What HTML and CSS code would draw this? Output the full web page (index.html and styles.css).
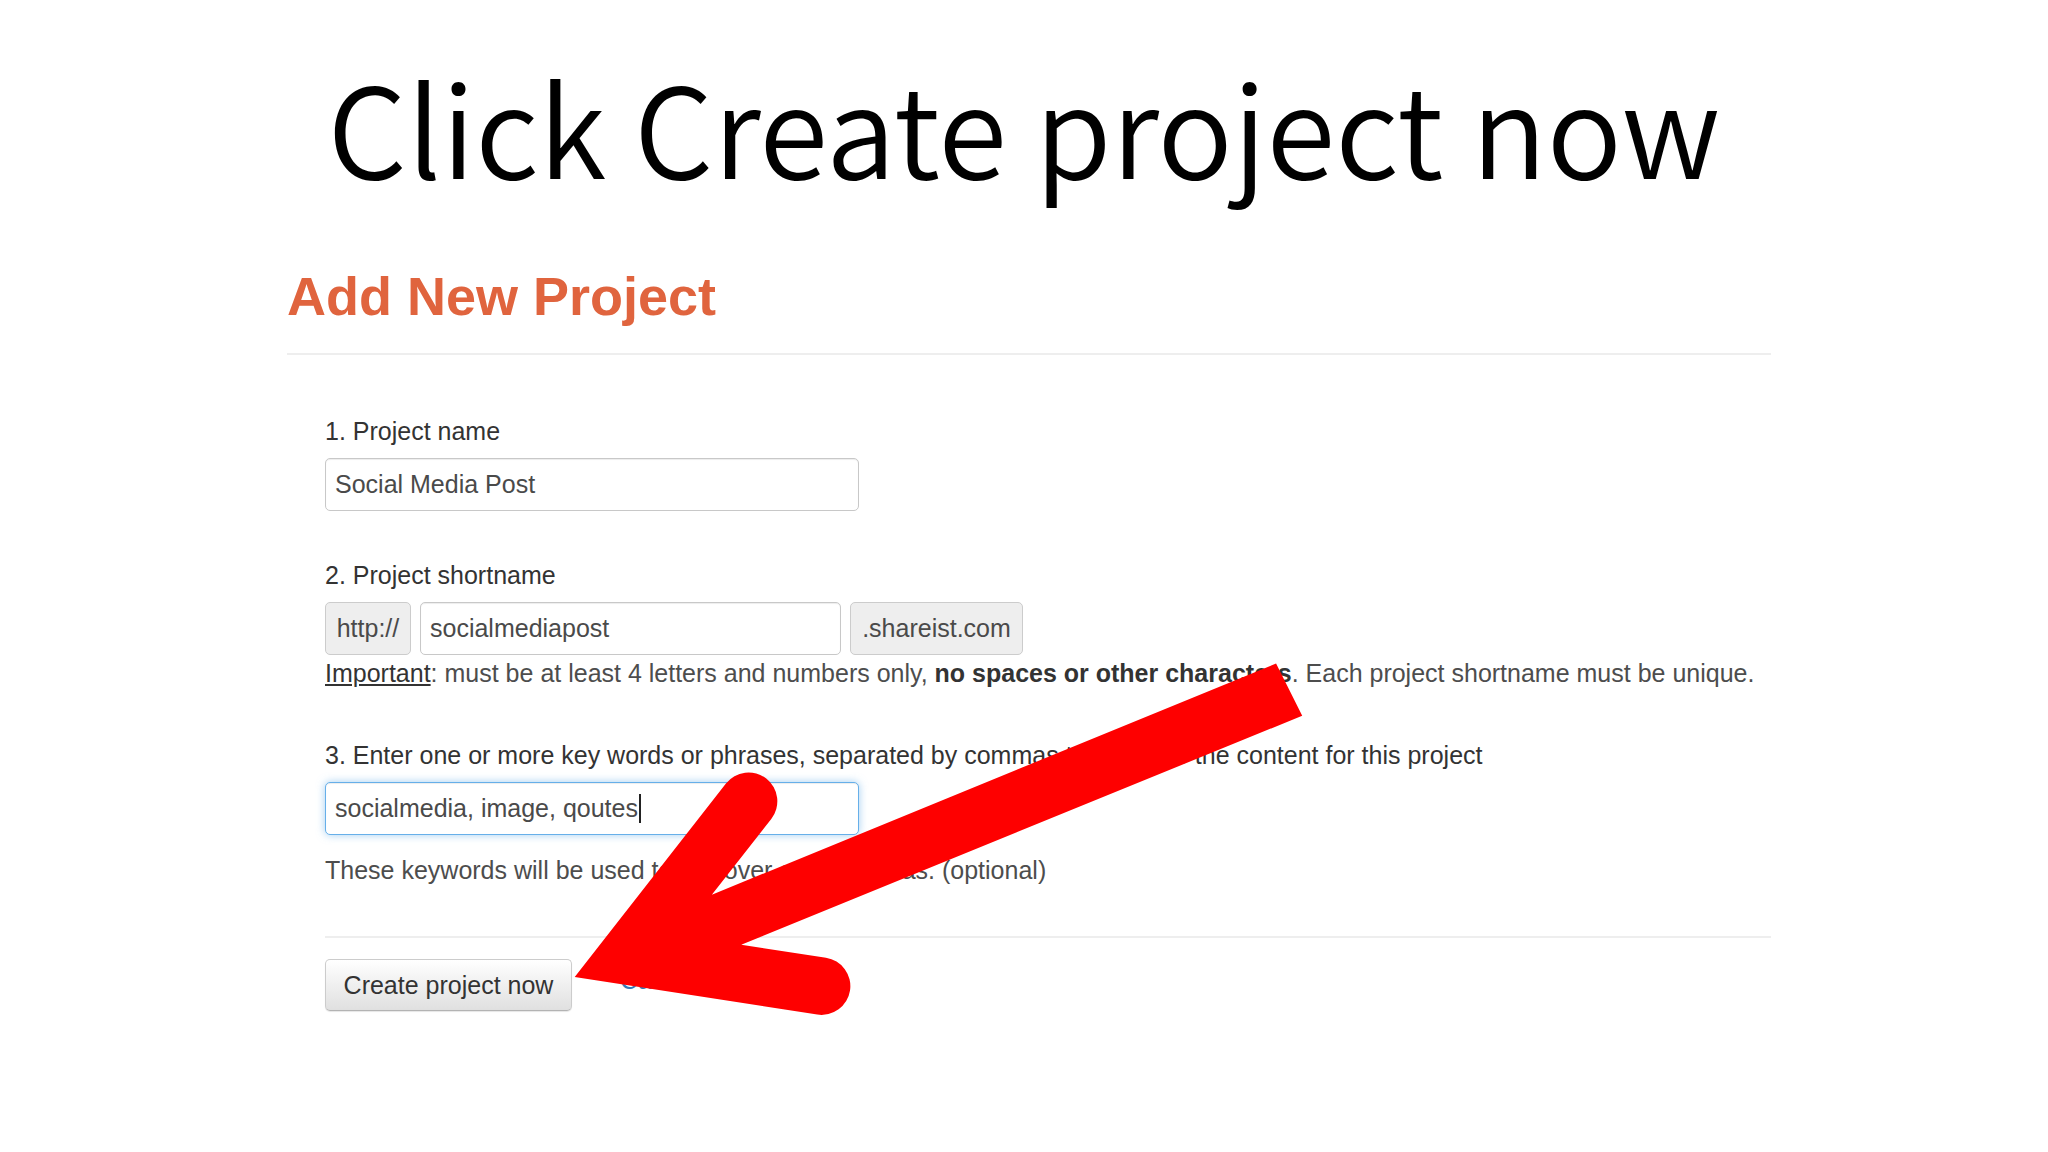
FILE: index.html
```html
<!DOCTYPE html>
<html lang="en">
<head>
    <meta charset="UTF-8">
    <meta name="viewport" content="width=device-width, initial-scale=1.0">
    <title>Click Create project now</title>
    <link rel="stylesheet" href="styles.css">
</head>
<body>
    <h1 class="slide-title">Click Create project now</h1>

    <div class="shot">
        <h2 class="page-header">Add New Project</h2>

        <form class="project-form">
            <div class="form-group">
                <label>1. Project name</label>
                <input class="form-control name" type="text" value="Social Media Post">
            </div>

            <div class="form-group">
                <label>2. Project shortname</label>
                <div class="input-row">
                    <span class="addon prefix">http://</span>
                    <input class="form-control short" type="text" value="socialmediapost">
                    <span class="addon suffix">.shareist.com</span>
                </div>
                <p class="help-block"><u>Important</u>: must be at least 4 letters and numbers only, <b>no spaces or other characters</b>. Each project shortname must be unique.</p>
            </div>

            <div class="form-group">
                <label>3. Enter one or more key words or phrases, separated by commas to describe the content for this project</label>
                <div class="form-control name focused">socialmedia, image, qoutes<span class="caret"></span></div>
                <p class="help-block spaced">These keywords will be used to discover content ideas. (optional)</p>
            </div>

            <div class="form-actions">
                <button type="button" class="btn">Create project now</button>
                <a href="#" class="cancel">Cancel</a>
            </div>
        </form>
    </div>

    <!-- big red pointer drawn on top of the page -->
    <svg class="arrow" viewBox="0 0 1568 882" xmlns="http://www.w3.org/2000/svg">
        <path d="M 440 748 L 555.8 599.9 A 22 22 0 0 1 590.5 627 L 545 685 L 977 508 L 997 548 L 567.5 723.3 L 632.4 733.3 A 22 22 0 0 1 625.7 776.8 Z" fill="#fe0000"/>
    </svg>
</body>
</html>
```

FILE: styles.css
```css
body {
    margin: 0;
    background-color: #fff;
    font-family: "Liberation Sans", Arial, sans-serif;
    color: #333;
    position: relative;
    height: 1152px;
    overflow: hidden;
}

.slide-title {
    margin: 0;
    padding-top: 62px;
    height: 125px;
    font-family: "Noto Sans CJK KR", "Open Sans", sans-serif;
    font-weight: 350;
    font-size: 125px;
    line-height: 1;
    text-align: center;
    color: #000;
}

.shot {
    margin: 80px 0 0 262px;
    padding-left: 25px;
    width: 1484px;
}

.page-header {
    margin: 0;
    font-size: 54px;
    line-height: 1.1;
    font-weight: bold;
    color: #e0643e;
    padding-bottom: 27px;
    border-bottom: 2px solid #eee;
}

.project-form {
    margin: 58px 0 0 38px;
    font-size: 25px;
}

.form-group {
    margin-bottom: 46px;
}

.form-group label {
    display: block;
    line-height: 36px;
    margin-bottom: 9px;
    color: #333;
}

.form-control {
    box-sizing: border-box;
    height: 53px;
    padding: 0 9px;
    font: inherit;
    font-size: 25px;
    color: #4a4a4a;
    background: #fff;
    border: 1px solid #c8c8c8;
    border-radius: 5px;
    box-shadow: inset 0 1px 1px rgba(0, 0, 0, 0.075);
    outline: none;
}

.form-control.name {
    display: block;
    width: 534px;
}

.form-control.focused {
    line-height: 51px;
    border-color: #66afe9;
    box-shadow: inset 0 1px 1px rgba(0, 0, 0, 0.075), 0 0 8px rgba(102, 175, 233, 0.6);
}

.caret {
    display: inline-block;
    width: 2px;
    height: 29px;
    margin-left: 1px;
    vertical-align: -6px;
    background-color: #222;
}

.input-row {
    display: flex;
    gap: 9px;
    height: 53px;
}

.form-control.short {
    width: 421px;
}

.addon {
    box-sizing: border-box;
    display: flex;
    align-items: center;
    justify-content: center;
    background-color: #eee;
    border: 1px solid #ccc;
    border-radius: 5px;
    color: #4a4a4a;
}

.addon.prefix {
    width: 86px;
}

.addon.suffix {
    width: 173px;
}

.help-block {
    margin: 0;
    line-height: 36px;
    color: #4d4d4d;
}

.help-block.spaced {
    margin-top: 17px;
}

.help-block u,
.help-block b {
    color: #333;
}

.form-actions {
    margin-top: 48px;
    padding-top: 21px;
    border-top: 2px solid #eee;
    display: flex;
    align-items: center;
    gap: 48px;
}

.btn {
    height: 52px;
    width: 247px;
    padding: 0;
    font: inherit;
    font-size: 25px;
    color: #333;
    background: linear-gradient(to bottom, #fff 0%, #e0e0e0 100%);
    border: 1px solid #ccc;
    border-bottom-color: #b3b3b3;
    border-radius: 5px;
    box-shadow: 0 1px 1px rgba(0, 0, 0, 0.1);
}

.cancel {
    padding-bottom: 9px;
    color: #337ab7;
    text-decoration: none;
}

.arrow {
    position: absolute;
    left: 0;
    top: 0;
    width: 2048px;
    height: 1152px;
    pointer-events: none;
}
```
